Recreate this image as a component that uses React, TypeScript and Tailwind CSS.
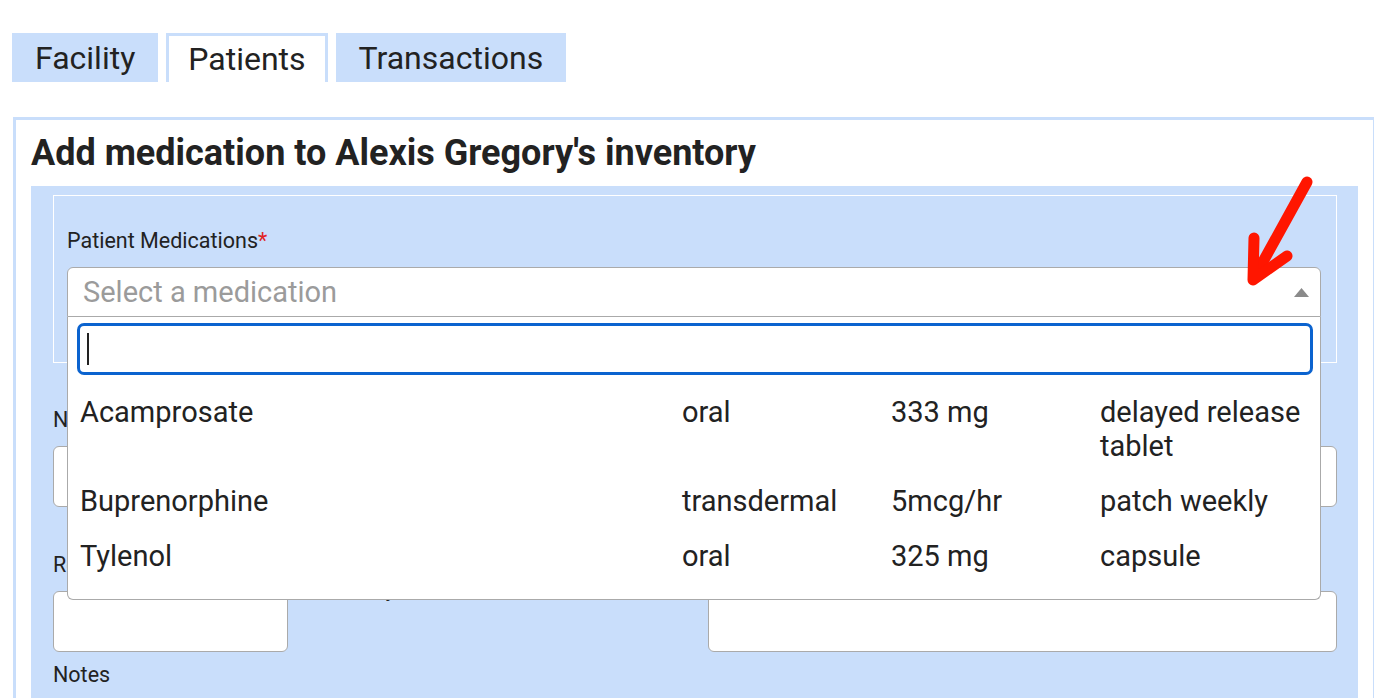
import React from 'react';

const tabs = ['Facility', 'Patients', 'Transactions'];

const meds = [
  { name: 'Acamprosate', route: 'oral', strength: '333 mg', form: 'delayed release tablet' },
  { name: 'Buprenorphine', route: 'transdermal', strength: '5mcg/hr', form: 'patch weekly' },
  { name: 'Tylenol', route: 'oral', strength: '325 mg', form: 'capsule' },
];

const Label: React.FC<{ children: React.ReactNode; className?: string }> = ({ children, className = '' }) => (
  <div className={`text-[21.5px] leading-[26px] text-[#222] ${className}`}>{children}</div>
);

const App: React.FC = () => {
  return (
    <div className="relative w-[1374px] h-[698px] overflow-hidden bg-white font-['Roboto',sans-serif] text-[#222]">
      {/* tabs */}
      <div className="flex gap-2 pl-3 pt-[33px]">
        {tabs.map((t) =>
          t === 'Patients' ? (
            <div
              key={t}
              className="h-[49px] px-[19px] flex items-center bg-white border-[3px] border-b-0 border-[#c9defb] text-[32px] leading-none"
            >
              {t}
            </div>
          ) : (
            <div key={t} className="h-[49px] px-[23px] flex items-center bg-[#c9defb] text-[32px] leading-none">
              {t}
            </div>
          )
        )}
      </div>

      {/* panel */}
      <div className="ml-[13px] mt-[35px] w-[1363px] border-[3px] border-[#c9defb] px-[15px] pt-[13px]">
        <h2 className="text-[36px] leading-[40px] font-bold text-[#222]">Add medication to Alexis Gregory's inventory</h2>

        <div className="mt-[13px] bg-[#c9defb] pl-[22px] pr-[21px] pt-[9px] pb-10">
          {/* medication picker */}
          <div className="border border-white pl-[13px] pr-[15px] pt-[32px] pb-[45px]">
            <Label>
              Patient Medications<span className="text-[#e02424]">*</span>
            </Label>
            <div className="relative mt-[13px]">
              <div className="h-[50px] flex items-center justify-between bg-white border border-[#aaa] rounded-t-[6px] pl-[15px] pr-[11px]">
                <span className="text-[29px] leading-none text-[#9b9b9b]">Select a medication</span>
                <svg width="15" height="9" viewBox="0 0 15 9">
                  <path d="M7.5 0 L15 9 L0 9 Z" fill="#8a8a8a" />
                </svg>
              </div>
              <div className="absolute left-0 right-0 top-full z-10 bg-white border border-t-0 border-[#aaa] rounded-b-[6px] pb-[15px]">
                <div className="ml-[9px] mr-[7px] mt-[6px] h-[52px] border-[3px] border-[#0b63cf] rounded-[7px] flex items-center pl-[7px]">
                  <span className="w-[2px] h-[32px] bg-[#222]" />
                </div>
                <div className="mt-[10px]">
                  {meds.map((m) => (
                    <div
                      key={m.name}
                      className="grid grid-cols-[602px_209px_209px_1fr] pl-[12px] pr-[12px] pt-[10px] pb-[11px] text-[29px] leading-[34px] text-[#222]"
                    >
                      <span>{m.name}</span>
                      <span>{m.route}</span>
                      <span>{m.strength}</span>
                      <span>{m.form}</span>
                    </div>
                  ))}
                </div>
              </div>
            </div>
          </div>

          {/* fields behind the dropdown */}
          <Label className="mt-[44px]">Name</Label>
          <div className="mt-[13px] h-[61px] bg-white border border-[#aaa] rounded-[6px]" />

          <div className="mt-[45px] flex">
            <div className="w-[235px]">
              <Label>Refills</Label>
              <div className="mt-[13px] h-[61px] bg-white border border-[#aaa] rounded-[6px]" />
            </div>
            <div className="w-[420px] pl-[28px]">
              <Label className="mt-[24px]">Quantity</Label>
            </div>
            <div className="flex-1">
              <Label>Prescriber</Label>
              <div className="mt-[13px] h-[61px] bg-white border border-[#aaa] rounded-[6px]" />
            </div>
          </div>

          <Label className="mt-[10px]">Notes</Label>
        </div>
      </div>

      {/* annotation arrow */}
      <svg className="absolute left-0 top-0 pointer-events-none" width="1374" height="698">
        <g stroke="#ff1600" strokeWidth="11" strokeLinecap="round" strokeLinejoin="round" fill="none">
          <path d="M1307 182 L1254 278" />
          <path d="M1254 238 L1253 280 L1287 256" />
        </g>
      </svg>
    </div>
  );
};

export default App;
